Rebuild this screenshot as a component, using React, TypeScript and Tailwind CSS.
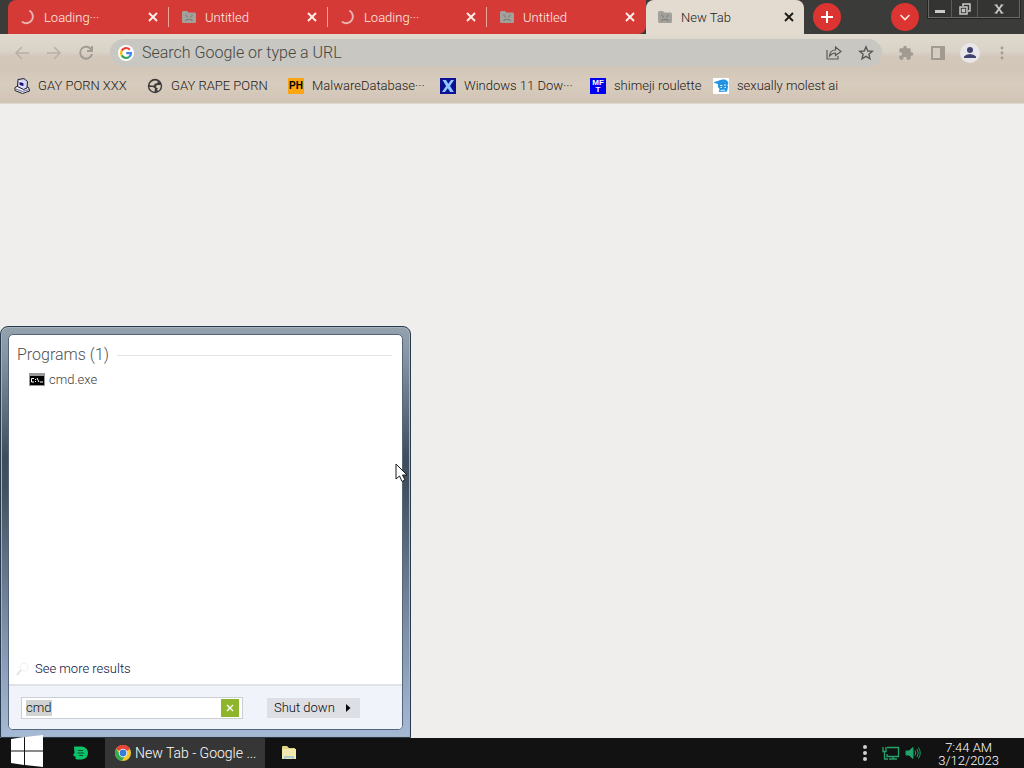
import React, { useState } from "react";

const tabs = [
  { title: "Loading···", loading: true },
  { title: "Untitled", loading: false },
  { title: "Loading···", loading: true },
  { title: "Untitled", loading: false },
];

function Spinner() {
  return (
    <svg viewBox="0 0 16 16" className="size-4" fill="none">
      <path d="M10 2A6.5 6.5 0 0 1 2.5 13" stroke="#e9b3ae" strokeWidth="2" strokeLinecap="round" />
    </svg>
  );
}

function SadFolder() {
  return (
    <svg viewBox="0 0 16 16" className="size-4" fill="none">
      <path d="M1 3.5Q1 2 2.5 2H6L7.5 3.5H13.500Q15 3.5 15 5V12.500Q15 14 13.500 14H2.500Q1 14 1 12.500Z" fill="#a3a19c" />
      <path d="M5 5.500V7M6 7V8.500M10 7V8.500M11 5.500V7M4.500 12L6 10.500H10L11.500 12" stroke="#7e7b76" strokeWidth="1.100" />
    </svg>
  );
}

function Cross() {
  return (
    <svg viewBox="0 0 10 10" className="size-[10px]" fill="none" stroke="currentColor" strokeWidth="1.900">
      <path d="M1 1L9 9M9 1L1 9" />
    </svg>
  );
}

function GoogleLogo() {
  return (
    <svg viewBox="0 0 16 16" className="size-4 shrink-0" fill="none">
      <circle cx="8" cy="8" r="8" fill="#fff" />
      <g strokeWidth="2.200">
        <path d="M11.800 4.700A5 5 0 0 0 3.700 5.600" stroke="#ea4335" />
        <path d="M3.700 5.600A5 5 0 0 0 3.700 10.400" stroke="#fbbc05" />
        <path d="M3.700 10.400A5 5 0 0 0 11.200 11.900" stroke="#34a853" />
        <path d="M11.200 11.900A5 5 0 0 0 13 8.100H8.200" stroke="#4285f4" />
      </g>
    </svg>
  );
}

function ComputerIcon() {
  return (
    <svg viewBox="0 0 16 16" className="size-4">
      <path d="M1 9.500L4 8L14 9L15.500 11.500V13L8.500 15.500L1 12.500Z" fill="#f3f2fb" stroke="#1c1c2a" />
      <path d="M4 1.500L10 0.600L13.500 3.500L13 10L9.500 11.500L3.500 8.500Z" fill="#d8d6f4" stroke="#1c1c2a" />
      <path d="M5 3L10 4.500V9L5 7.500Z" fill="#ffffff" />
      <path d="M5.500 4L9.500 5V8.200L5.500 7Z" fill="#1a157f" />
      <path d="M2 11L8.500 13.500L15 11.500" stroke="#6b6a92" fill="none" />
    </svg>
  );
}

function Globe() {
  return (
    <svg viewBox="0 0 16 16" className="size-4">
      <circle cx="8" cy="8" r="7.200" fill="#3c3c3c" />
      <path d="M8 2.500Q10.500 2.500 11 4L9.500 5.500H8L7 7.500H3.500L2.500 6.500Q4 3 8 2.500ZM9 8L10.500 7H13.700Q14 11 11 13L10 11.500L11 10H9.500ZM2.300 9H6L8 10.500L7.500 13.700Q3.500 13.300 2.300 9Z" fill="#d8cbbd" />
    </svg>
  );
}

function PhIcon() {
  return <span className="flex size-4 items-center justify-center bg-[#fba514] font-['Liberation_Sans'] text-[10px] font-bold leading-4 text-black">PH</span>;
}

function XIcon() {
  return (
    <svg viewBox="0 0 16 16" className="size-4">
      <rect width="16" height="16" fill="#0a1195" />
      <path d="M2.500 2H6L8.300 5.800L11 2H14L10 8L13.800 14H10.200L7.800 10.300L5 14H2L6.100 8Z" fill="#91c8ff" />
    </svg>
  );
}

function MftIcon() {
  return (
    <span className="flex size-4 flex-col items-center justify-center bg-[#0000f0] font-['Liberation_Sans'] text-[8px] font-bold leading-[7px] text-white">
      <span>MF</span>
      <span>T</span>
    </span>
  );
}

function BlueHead() {
  return (
    <svg viewBox="0 0 16 16" className="size-4">
      <rect width="16" height="16" fill="#fff" />
      <path d="M1 4L5 3Q7 1 12 1.500Q15 2.500 15.500 5L14.500 7L15 9L14 13.500L6 14L6.500 11L5 9V6L1.500 5Z" fill="#2193e3" />
      <path d="M7 7.500H9.500M11 7H13M7.500 12.500L12 12M7.500 9.500H9M11.500 9.500H13" stroke="#d9f0ff" strokeWidth="1.200" />
    </svg>
  );
}

const bookmarks = [
  { label: "GAY PORN XXX", icon: <ComputerIcon />, width: "w-[133px]" },
  { label: "GAY RAPE PORN", icon: <Globe />, width: "w-[141px]" },
  { label: "MalwareDatabase···", icon: <PhIcon />, width: "w-[152px]" },
  { label: "Windows 11 Dow···", icon: <XIcon />, width: "w-[150px]" },
  { label: "shimeji roulette", icon: <MftIcon />, width: "w-[123px]" },
  { label: "sexually molest ai", icon: <BlueHead />, width: "w-[140px]" },
];

function TabStrip() {
  return (
    <div className="flex h-[34px] bg-[#3b3c3a] pl-2">
      <div className="flex overflow-hidden rounded-tl-lg rounded-br-lg bg-[#d63a37] text-[#fff0e8]">
        {tabs.map((tab, i) => (
          <div key={i} className={`${i === 0 ? "w-[161px]" : "w-[159px]"} flex items-center pl-3`}>
            {tab.loading ? <Spinner /> : <SadFolder />}
            <span className="ml-2 flex-1 pt-px text-[13px]">{tab.title}</span>
            <button aria-label="Close tab" className="mr-[10px]"><Cross /></button>
            <span className={i < 3 ? "h-5 w-px bg-[#eaa69b]" : "w-px"} />
          </div>
        ))}
      </div>
      <div className="flex w-[158px] items-center rounded-t-lg bg-[#e3dbd0] pl-[11px] text-[#1d1b18]">
        <SadFolder />
        <span className="ml-2 flex-1 pt-px text-[13px]">New Tab</span>
        <button aria-label="Close tab" className="mr-[10px]"><Cross /></button>
      </div>
      <button aria-label="New tab" className="ml-[9px] mt-[3px] flex size-7 items-center justify-center rounded-full bg-[#dc3431]">
        <svg viewBox="0 0 14 14" className="size-[14px]" stroke="#fff" strokeWidth="2"><path d="M7 1V13M1 7H13" /></svg>
      </button>
      <div className="flex-1" />
      <button aria-label="Search tabs" className="mr-[9px] mt-[3px] flex size-7 items-center justify-center rounded-full bg-[#dc3431]">
        <svg viewBox="0 0 12 12" className="size-3" fill="none" stroke="#ffe5dc" strokeWidth="1.700"><path d="M1.500 4L6 8.500L10.500 4" /></svg>
      </button>
      <div className="mr-1 flex h-[18px] border border-t-0 border-[#686966] bg-[#343533] text-[#c9c9c9] shadow-[0_0_0_1px_#242523]">
        <button aria-label="Minimize" className="flex w-[23px] items-center justify-center border-r border-[#5b5c59]">
          <svg viewBox="0 0 10 10" className="size-[10px]"><path d="M0 6H10V9H0Z" fill="currentColor" /></svg>
        </button>
        <button aria-label="Restore" className="flex w-[26px] items-center justify-center border-r border-[#5b5c59]">
          <svg viewBox="0 0 12 12" className="size-3" fill="none" stroke="currentColor" strokeWidth="1.500"><path d="M4 3V1H11V8H9M1 4H8V11H1ZM3.500 6.500H5.500V8.500H3.500Z" /></svg>
        </button>
        <button aria-label="Close" className="flex w-[41px] items-center justify-center">
          <svg viewBox="0 0 10 10" className="size-[10px]" fill="none" stroke="currentColor" strokeWidth="1.800"><path d="M2 1L8 9M8 1L2 9" /><path d="M0.500 1H3.500M6.500 1H9.500M0.500 9H3.500M6.500 9H9.500" strokeWidth="1" /></svg>
        </button>
      </div>
    </div>
  );
}

function Toolbar() {
  return (
    <div className="flex h-[37px] items-center pl-[14px] pr-[14px] text-[#b7b0a5]">
      <div className="flex gap-4">
        <button aria-label="Back"><svg viewBox="0 0 16 16" className="size-4" fill="none" stroke="currentColor" strokeWidth="1.500"><path d="M15 8H2M8 2L2 8L8 14" /></svg></button>
        <button aria-label="Forward"><svg viewBox="0 0 16 16" className="size-4" fill="none" stroke="currentColor" strokeWidth="1.500"><path d="M1 8H14M8 2L14 8L8 14" /></svg></button>
        <button aria-label="Reload" className="text-[#a19b92]"><svg viewBox="0 0 16 16" className="size-4" fill="none" stroke="currentColor" strokeWidth="1.900"><path d="M13.500 5A6 6 0 1 0 14 9M14 1V6H9" /></svg></button>
      </div>
      <div className="ml-4 flex h-7 flex-1 items-center rounded-full bg-[#c8c7c1] pl-2 pr-2 text-[#595a57]">
        <GoogleLogo />
        <input aria-label="Address" placeholder="Search Google or type a URL" className="ml-2 min-w-0 flex-1 bg-transparent text-base outline-none placeholder:text-[#454642]" />
        <button aria-label="Share">
          <svg viewBox="0 0 16 16" className="size-4" fill="none" stroke="currentColor" strokeWidth="1.200"><path d="M1 5V14H12V11M3.500 11Q4 5 9.500 5V2L15 6.500L9.500 10.500V8Q6 8 3.500 11Z" /></svg>
        </button>
        <button aria-label="Bookmark" className="ml-4">
          <svg viewBox="0 0 16 16" className="size-4" fill="none" stroke="currentColor" strokeWidth="1.400"><path d="M8 1.800L9.800 6L14.300 6.400L10.900 9.300L12 13.800L8 11.400L4 13.800L5.100 9.300L1.700 6.400L6.200 6Z" /></svg>
        </button>
      </div>
      <div className="ml-4 flex items-center gap-4 text-[#a09a91]">
        <button aria-label="Extensions"><svg viewBox="0 0 24 24" className="size-4" fill="currentColor"><path d="M20.500 11H19V7q0-2-2-2h-4V3.500a2.500 2.500 0 0 0-5 0V5H4Q2 5 2 7v3.800h1.500a2.700 2.700 0 0 1 0 5.400H2V20q0 2 2 2h3.800v-1.500a2.700 2.700 0 0 1 5.400 0V22H17q2 0 2-2v-4h1.500a2.500 2.500 0 0 0 0-5Z" /></svg></button>
        <button aria-label="Side panel"><svg viewBox="0 0 16 16" className="size-4" fill="none" stroke="currentColor" strokeWidth="2"><path d="M2 2H14V14H2Z" fill="#d5ccbf" /><path d="M11 2H14V14H11Z" fill="currentColor" /></svg></button>
        <button aria-label="Profile" className="-mx-[2px] flex size-5 items-center justify-center rounded-full bg-[#e8e6e8]">
          <svg viewBox="0 0 14 14" className="size-[14px]" fill="#3f426d"><circle cx="7" cy="4" r="3" /><path d="M1 12V10.500Q3 8 7 8T13 10.500V12Z" /></svg>
        </button>
        <button aria-label="Menu"><svg viewBox="0 0 16 16" className="size-4" fill="currentColor"><circle cx="8" cy="3" r="1.400" /><circle cx="8" cy="8" r="1.400" /><circle cx="8" cy="13" r="1.400" /></svg></button>
      </div>
    </div>
  );
}

function StartMenu() {
  const [query, setQuery] = useState("cmd");
  return (
    <section aria-label="Start menu" className="flex h-[412px] w-[411px] flex-col rounded-t-lg border border-[#273b50] bg-[linear-gradient(180deg,#94a2ae_0%,#8795a2_7%,#3f4c59_32%,#44515f_40%,#8091aa_75%,#a7bad5_100%)] p-[7px] shadow-[inset_0_0_0_1px_#a7b4bf]">
      <div className="flex flex-1 flex-col overflow-hidden rounded-[5px] border border-[#53647b] bg-white">
        <div className="flex flex-1 flex-col pt-[10px]">
          <div className="flex items-center gap-2 pl-2 pr-[10px]">
            <h2 className="text-base leading-5 text-[#505052]">Programs (1)</h2>
            <span className="h-px flex-1 bg-[#e2e3e6]" />
          </div>
          <a href="#cmd" className="mt-[5px] flex items-center gap-1 pl-5 text-[13px] leading-5 text-[#3c3c3c]">
            <svg viewBox="0 0 16 14" className="h-[14px] w-4"><rect width="16" height="13" fill="#999" /><rect x="1" y="3" width="14" height="9" fill="#000" /><path d="M5 5.500H2.500V9H5M6.500 6V7M6.500 8V9M8 5L10 9M11 9H14" stroke="#fff" fill="none" /></svg>
            cmd.exe
          </a>
          <a href="#results" className="mt-auto flex items-center gap-1 pb-[5px] pl-[6px] text-[13px] leading-5 text-[#0a1040]">
            <svg viewBox="0 0 16 16" className="size-4" fill="none" stroke="#eef2f3"><circle cx="9" cy="6" r="4" /><path d="M6 9L2 14" stroke="#dfe3e6" strokeWidth="2" /></svg>
            See more results
          </a>
        </div>
        <div className="flex h-[45px] items-center border-t-2 border-[#dfe2e6] bg-[#f0f3fa] pl-3">
          <div className="flex h-[22px] w-[222px] items-center border border-[#c9d0d3] bg-white">
            <span className="relative ml-1 flex flex-1 items-center">
              <span className="absolute left-0 h-4 w-[26px] bg-[#d1d2d2]" />
              <input aria-label="Search programs" value={query} onChange={(e) => setQuery(e.target.value)} className="relative w-full bg-transparent text-[13px] leading-5 text-[#101010] outline-none" />
            </span>
            <button aria-label="Clear search" onClick={() => setQuery("")} className="mr-[3px] flex size-[18px] items-center justify-center bg-[#8fb52d] text-white">
              <svg viewBox="0 0 8 8" className="size-2" stroke="currentColor" strokeWidth="1.400"><path d="M1 1L7 7M7 1L1 7" /></svg>
            </button>
          </div>
          <button className="ml-6 flex h-5 w-[93px] items-center justify-between bg-[#dddfe5] pl-[7px] pr-[9px] text-[13px] text-[#08080c]">
            Shut down
            <svg viewBox="0 0 5 8" className="h-2 w-[5px]" fill="currentColor"><path d="M0 0L4.500 4L0 8Z" /></svg>
          </button>
        </div>
      </div>
    </section>
  );
}

function Taskbar() {
  return (
    <footer className="flex h-[30px] shrink-0 items-center bg-[#111211] text-white">
      <button aria-label="Start" className="relative -mt-1 ml-[10px]">
        <svg viewBox="0 0 33 32" className="h-8 w-[33px]" fill="#fff"><path d="M1 4L14 2V15.500H1ZM15 2L33 0V15.500H15ZM1 16.500H14V30L1 28ZM15 16.500H33V32L15 30Z" /></svg>
      </button>
      <button aria-label="Green application" className="ml-[30px]">
        <svg viewBox="0 0 16 16" className="size-4"><path d="M1 1.500H9Q15 2.500 15 8T9 14.500H4Q2 14.500 2.500 11.500L0.500 11V9L1.500 8Z" fill="#0cc36a" /><path d="M5 5.500H10M4.500 8H11M6 10.500H10" stroke="#094f33" strokeWidth="1.200" /></svg>
      </button>
      <button className="ml-4 flex h-full w-40 items-center gap-1 whitespace-nowrap bg-[#363636] pl-[10px] text-[14px]">
        <svg viewBox="0 0 16 16" className="size-4 shrink-0"><circle cx="8" cy="8" r="8" fill="#f5c630" /><path d="M8 8L1 4A8 8 0 0 1 15 4Z" fill="#e84338" /><path d="M1 4A8 8 0 0 0 7 16L10 10L5 9Z" fill="#37a953" /><circle cx="8" cy="8" r="4.200" fill="#fff" /><circle cx="8" cy="8" r="3.400" fill="#367dd9" /></svg>
        <span>New Tab - Google ...</span>
      </button>
      <button aria-label="File explorer" className="ml-4">
        <svg viewBox="0 0 16 16" className="size-4"><path d="M1 2Q1 1 2 1H6L8 3H14V14H1Z" fill="#e3d487" /><path d="M2 4H15V14H1V5Z" fill="#f3e9af" /><path d="M3 14V12Q3 11 4 11H12Q13 11 13 12V14H11V13H5V14Z" fill="#a9cdd0" /></svg>
      </button>
      <div className="ml-auto flex items-center pr-[25px]">
        <button aria-label="Hidden icons"><svg viewBox="0 0 6 18" className="h-[18px] w-[6px]" fill="#d0d0d0"><circle cx="3" cy="3" r="2" /><circle cx="3" cy="9" r="2" /><circle cx="3" cy="15" r="2" /></svg></button>
        <svg viewBox="0 0 18 16" className="ml-[14px] h-4 w-[18px]" fill="none" stroke="#26a36b" strokeWidth="1.300"><path d="M5 2.500H16.500V11.500H5V9M1 2V6.500H4V2M2.500 6.500V14H6M11 11.500V14M7 14H15" /></svg>
        <svg viewBox="0 0 16 16" className="ml-[5px] size-4" fill="none" stroke="#16a269"><path d="M1 6H4L8 2.500V13.500L4 10H1Z" fill="#26a36b" /><path d="M10 5.500Q11.500 8 10 10.500M12 4Q14.500 8 12 12M13.500 2.500Q17 8 13.500 13.500" /></svg>
        <time className="ml-[17px] pt-px text-center text-[13px] leading-[13px]">7:44 AM<br />3/12/2023</time>
      </div>
    </footer>
  );
}

export default function App() {
  return (
    <div className="relative flex min-h-screen flex-col bg-[#f0eeed] font-['Roboto','Liberation_Sans',sans-serif] font-light">
      <header>
        <TabStrip />
        <div className="h-[70px] border-b border-[#dfd8d0] bg-[linear-gradient(180deg,#e0dacf_0%,#d9d2c6_26%,#d3c8ba_32%,#d2c6b8_50%,#d8ccbe_72%,#d1c4b5_100%)]">
          <Toolbar />
          <nav className="flex h-[30px] items-center pl-[14px] text-[13px] text-[#1c1815]">
            {bookmarks.map((item) => (
              <a href="#bookmark" key={item.label} className={`${item.width} flex shrink-0 items-center gap-2 whitespace-nowrap`}>
                {item.icon}
                <span>{item.label}</span>
              </a>
            ))}
          </nav>
        </div>
      </header>
      <main className="flex flex-1 items-end"><StartMenu /></main>
      <Taskbar />
      <svg viewBox="0 0 13 20" className="pointer-events-none absolute left-[395px] top-[463px] h-5 w-[13px]" fill="#fff" stroke="#171c22"><path d="M1 1V16L4.500 13L7 18.500L10 17L7.500 12H12Z" /></svg>
    </div>
  );
}
